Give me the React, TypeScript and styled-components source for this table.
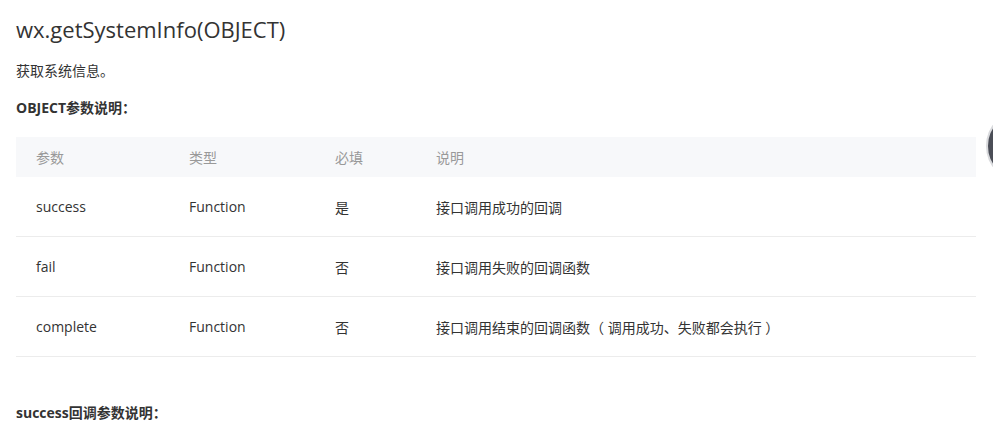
import React from "react";
import styled, { createGlobalStyle } from "styled-components";

const Global = createGlobalStyle`
  html, body { margin: 0; padding: 0; background: #fff; }
  body {
    font-family: "Open Sans", "Noto Sans CJK SC", sans-serif;
    color: #333;
    overflow: hidden;
  }
`;

const Page = styled.div`
  padding: 0 17px 0 16px;
`;

const Title = styled.h2`
  margin: 14px 0 0;
  font-size: 22px;
  line-height: 30px;
  font-weight: 400;
  color: #333;
`;

const Para = styled.p`
  margin: 17px 0 0;
  font-size: 14px;
  line-height: 20px;
`;

const SubHead = styled.h4<{ $gap: number }>`
  margin: ${(p) => p.$gap}px 0 0;
  font-size: 14px;
  line-height: 20px;
  font-weight: 700;
  color: #333;
`;

const Table = styled.div`
  margin-top: 19px;
  display: grid;
  grid-template-columns: 153px 146px 101px 1fr;
`;

const HeadCell = styled.div`
  background: #f7f8fa;
  height: 40px;
  display: flex;
  align-items: center;
  padding-left: 20px;
  font-size: 14px;
  color: #999;
`;

const Cell = styled.div`
  height: 59px;
  display: flex;
  align-items: center;
  padding-left: 20px;
  font-size: 14px;
  color: #333;
  border-bottom: 1px solid #ececec;
`;

const FloatBtn = styled.div`
  position: fixed;
  top: 110px;
  right: -65px;
  width: 68px;
  height: 68px;
  border-radius: 50%;
  background: #4b4e57;
  border: 2px solid #d9dadd;
`;

const rows = [
  ["success", "Function", "是", "接口调用成功的回调"],
  ["fail", "Function", "否", "接口调用失败的回调函数"],
  ["complete", "Function", "否", "接口调用结束的回调函数（ 调用成功、失败都会执行 ）"],
];

export default function App() {
  return (
    <>
      <Global />
      <Page>
        <Title>wx.getSystemInfo(OBJECT)</Title>
        <Para>获取系统信息。</Para>
        <SubHead $gap={17}>OBJECT参数说明：</SubHead>
        <Table>
          {["参数", "类型", "必填", "说明"].map((h) => (
            <HeadCell key={h}>{h}</HeadCell>
          ))}
          {rows.map((r) =>
            r.map((c, i) => <Cell key={r[0] + i}>{c}</Cell>)
          )}
        </Table>
        <SubHead $gap={46}>success回调参数说明：</SubHead>
      </Page>
      <FloatBtn />
    </>
  );
}
